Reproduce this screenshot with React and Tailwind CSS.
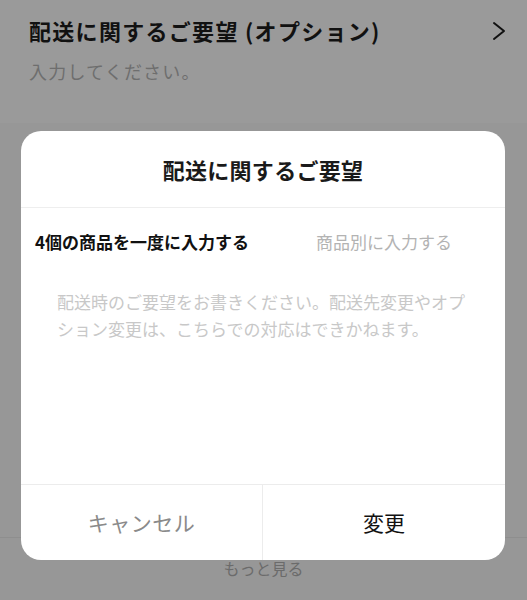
import React, { useState } from 'react';

const font = { fontFamily: '"Noto Sans CJK JP", "Noto Sans", sans-serif' };

export default function App() {
  const [mode, setMode] = useState('all');
  const [note, setNote] = useState('');

  return (
    <div className="relative w-[527px] h-[600px] overflow-hidden bg-[#979797]" style={font}>
      {/* ページ本体 (オーバーレイ越し) */}
      <div className="bg-[#9a9a9a] h-[123px] px-[29px] pt-[15px]">
        <div className="flex items-center justify-between">
          <h2 className="text-[22px] leading-[30px] font-bold text-[#111] tracking-[1.3px]">
            配送に関するご要望 (オプション)
          </h2>
          <svg width="16" height="20" viewBox="0 0 16 20" className="mr-[-9px] mt-[1px]">
            <path d="M3 2 L13 10 L3 18" fill="none" stroke="#111" strokeWidth="2" strokeLinecap="round" strokeLinejoin="round" />
          </svg>
        </div>
        <p className="mt-[13px] text-[18px] leading-[26px] text-[#6e6e6e] tracking-[1.2px]">入力してください。</p>
      </div>
      <div className="h-[414px]" />
      <div className="border-t border-[#8e8e8e] pt-[17px] text-center text-[16px] leading-[26px] text-[#6b6b6b]">
        もっと見る
      </div>

      {/* モーダル */}
      <div className="absolute left-[21px] top-[131px] w-[484px] h-[429px] bg-white rounded-[20px] flex flex-col overflow-hidden">
        <div className="h-[77px] flex items-center justify-center border-b border-[#eeeeee]">
          <h3 className="text-[22px] font-bold text-[#1a1a1a] tracking-[0.3px]">配送に関するご要望</h3>
        </div>

        <div className="grid grid-cols-2 pt-[23px] text-[17px] leading-[22px]">
          <button
            onClick={() => setMode('all')}
            className={mode === 'all' ? 'text-center font-bold text-[#111]' : 'text-center text-[#b3b3b3]'}
          >
            4個の商品を一度に入力する
          </button>
          <button
            onClick={() => setMode('each')}
            className={mode === 'each' ? 'text-center font-bold text-[#111]' : 'text-center text-[#b3b3b3]'}
          >
            商品別に入力する
          </button>
        </div>

        <textarea
          value={note}
          onChange={(e) => setNote(e.target.value)}
          placeholder="配送時のご要望をお書きください。配送先変更やオプション変更は、こちらでの対応はできかねます。"
          className="flex-1 resize-none outline-none px-[36px] pt-[35px] text-[17px] leading-[27px] text-[#222] placeholder:text-[#c8c8c8]"
        />

        <div className="grid grid-cols-2 h-[76px] border-t border-[#ececec]">
          <button className="text-[21px] text-[#8a8a8a] border-r border-[#ececec] tracking-[0.5px]">キャンセル</button>
          <button className="text-[21px] text-[#111]">変更</button>
        </div>
      </div>
    </div>
  );
}
